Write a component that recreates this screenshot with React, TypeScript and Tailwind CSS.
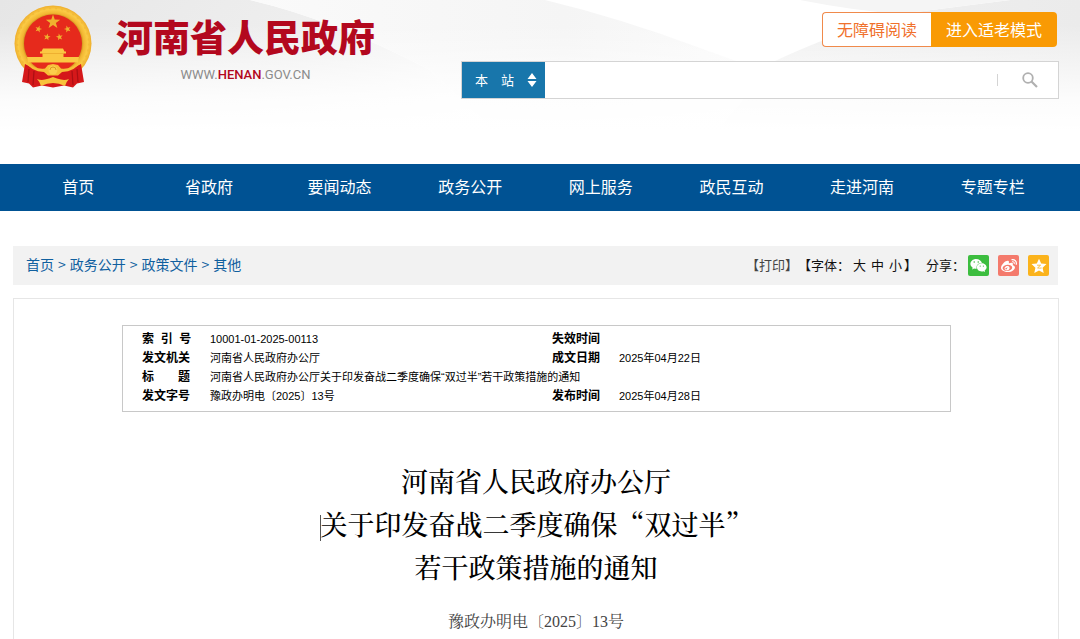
import React from "react";
import { FaWeibo, FaWeixin } from "react-icons/fa";

const navItems = ["首页", "省政府", "要闻动态", "政务公开", "网上服务", "政民互动", "走进河南", "专题专栏"];
const crumbs = ["首页", "政务公开", "政策文件", "其他"];

function Star({ x, y, r, turn = 0 }: { x: number; y: number; r: number; turn?: number }) {
  const points = Array.from({ length: 10 }, (_, i) => {
    const a = (Math.PI / 5) * i - Math.PI / 2 + turn;
    const d = i % 2 === 0 ? r : r * 0.4;
    return `${(x + d * Math.cos(a)).toFixed(2)},${(y + d * Math.sin(a)).toFixed(2)}`;
  }).join(" ");
  return <polygon points={points} />;
}

function Emblem() {
  return (
    <svg viewBox="0 0 78 84" className="h-[84px] w-[78px] shrink-0" aria-hidden="true">
      <defs>
        <radialGradient id="ring" cx="50%" cy="50%" r="50%">
          <stop offset="0.74" stopColor="#c98a1c" />
          <stop offset="0.8" stopColor="#f2b632" />
          <stop offset="0.9" stopColor="#fbcb45" />
          <stop offset="1" stopColor="#eeae2c" />
        </radialGradient>
      </defs>
      <ellipse cx="39" cy="38.500" rx="38.500" ry="38" fill="url(#ring)" />
      <ellipse cx="39" cy="38.500" rx="35.500" ry="35" fill="none" stroke="#e6a529" strokeWidth="1.500" strokeDasharray="2 4" opacity="0.3" />
      <circle cx="39" cy="38.500" r="29" fill="#e62a1c" />
      <g fill="#efb22f">
        <Star x={39} y={17} r={7.5} />
        <Star x={24.5} y={24} r={3.6} turn={0.3} />
        <Star x={53.5} y={24} r={3.6} turn={-0.3} />
        <Star x={33} y={32} r={3.6} turn={0.2} />
        <Star x={45.5} y={32} r={3.6} turn={-0.2} />
      </g>
      <path d="M29 43.500h20l1.500 3h1.500v2h-2.500V52h15.500l-1 5.500H14L13 52h15.500v-3.500H26v-2h1.500z" fill="#fbc843" />
      <path d="M28.500 48.500h21" stroke="#e8a62a" strokeWidth="0.700" />
      <path d="M11 59q10 6 21 4l7 3 7-3q11 2 21-4l3 18-7 1.500-4 4-9-2-11 2-11-2-9 2-4-4-7-1.500z" fill="#d5181a" />
      <path d="M15 64l-1 13m6-11l-1 14m39-14l1 14m4-16l1 13" stroke="#ab0f13" strokeWidth="1.200" />
      <path d="M12 57.500q9 7 19 6l3-3.500 5-1 5 1 3 3.500q10 1 19-6-5 9-18 9.500l-4 3.500H34l-4-3.500q-13-.5-18-9.500z" fill="#f7be38" />
      <circle cx="39" cy="65" r="4.500" fill="#fbcf4c" />
      <path d="M36 65a3 3 0 016 0" stroke="#dc9a23" fill="none" />
      <path d="M23 74q4 1.500 8 .5t8-2.500q4 1.500 8 2.500t8-.5q-3 3-4 7-6-3-12-3t-12 3q-1-4-4-7z" fill="#f8c23b" />
    </svg>
  );
}

function HeaderBackdrop() {
  return (
    <svg viewBox="0 0 1080 164" preserveAspectRatio="none" className="absolute inset-0 h-full w-full" aria-hidden="true">
      <defs>
        <linearGradient id="shadeLeft" x1="0" y1="0" x2="1" y2="0.3">
          <stop offset="0" stopColor="#e6e6e6" />
          <stop offset="0.6" stopColor="#efefef" />
          <stop offset="1" stopColor="#fafafa" />
        </linearGradient>
        <linearGradient id="shadeMiddle" x1="0" y1="0" x2="1" y2="0">
          <stop offset="0" stopColor="#fafafa" />
          <stop offset="0.6" stopColor="#f5f5f5" />
          <stop offset="1" stopColor="#fbfbfb" />
        </linearGradient>
        <linearGradient id="shadeRight" x1="0" y1="0" x2="1" y2="0">
          <stop offset="0" stopColor="#f2f2f2" />
          <stop offset="1" stopColor="#ebebeb" />
        </linearGradient>
        <linearGradient id="fadeDown" x1="0" y1="0" x2="0" y2="1">
          <stop offset="0.15" stopColor="#ffffff" stopOpacity="0" />
          <stop offset="0.6" stopColor="#ffffff" stopOpacity="0.85" />
          <stop offset="0.8" stopColor="#ffffff" />
        </linearGradient>
      </defs>
      <path d="M0 0H250Q330 18 430 70L530 164H0z" fill="url(#shadeLeft)" />
      <path d="M250 0H545Q620 18 700 48L775 75 720 164H530L430 70Q330 18 250 0z" fill="url(#shadeMiddle)" />
      <path d="M775 61Q830 35 900 14L1010 0H1080V164H690z" fill="url(#shadeRight)" />
      <path d="M800 0H1010L900 14Q850 10 800 0z" fill="#f5f5f5" />
      <rect width="1080" height="164" fill="url(#fadeDown)" />
    </svg>
  );
}

function Header() {
  return (
    <header className="relative h-[164px] overflow-hidden bg-white">
      <HeaderBackdrop />
      <div className="relative flex justify-between pr-[21px] pl-[14px]">
        <a href="#home" className="flex gap-6 pt-[5px]">
          <Emblem />
          <span className="flex flex-col items-center pt-[5px]">
            <span className="text-[37px] leading-[52px] font-black whitespace-nowrap text-[#b3081e]">河南省人民政府</span>
            <span className="pt-[4px] font-[Roboto] text-[13px] leading-[18px] text-[#8b8b8b]">
              WWW.<span className="font-medium text-[#b3081e]">HENAN</span>.GOV.CN
            </span>
          </span>
        </a>
        <div className="flex w-[598px] flex-col pt-3">
          <div className="flex h-[35px] justify-end pr-[2px] text-[16px]">
            <button type="button" className="rounded-l-sm border border-r-0 border-[#f08a4b] bg-white px-[14px] pb-[2px] text-[#f0712c]">
              无障碍阅读
            </button>
            <button type="button" className="rounded-r-sm bg-[#f99a04] px-[15px] pb-[2px] text-white">
              进入适老模式
            </button>
          </div>
          <form className="mt-[14px] flex h-[38px] border border-[#d4d4d4] bg-white">
            <div className="relative w-[83px] bg-[#1876ab]">
              <select aria-label="搜索范围" className="h-full w-full appearance-none bg-transparent pl-[13px] text-[13px] text-white outline-none">
                <option>本　站</option>
              </select>
              <svg viewBox="0 0 10 14" className="pointer-events-none absolute top-[11px] right-[8px] h-[14px] w-[10px]" fill="#fff" aria-hidden="true">
                <path d="M5 0l4.500 6H.5zM5 14l4.500-6H.5z" />
              </svg>
            </div>
            <input aria-label="搜索" type="text" className="min-w-0 flex-1 bg-transparent px-3 text-[14px] outline-none" />
            <button type="button" aria-label="搜索" className="my-3 flex w-[61px] items-center justify-center border-l border-[#d4d4d4] pl-[4px]">
              <svg viewBox="0 0 16 16" className="h-4 w-4 shrink-0" fill="none" stroke="#b0b0b0" aria-hidden="true">
                <circle cx="6" cy="6" r="4.800" strokeWidth="1.800" />
                <path d="M9.500 9.500l5.500 5.500" strokeWidth="2.200" />
              </svg>
            </button>
          </form>
        </div>
      </div>
    </header>
  );
}

function Toolbar() {
  return (
    <div className="mr-[1px] flex h-[39px] items-center justify-between bg-[#f2f2f2] pr-[9px] pl-[13px]">
      <nav aria-label="面包屑" className="flex pb-[2px] text-[14px] text-[#10609f]">
        {crumbs.map((c, i) => (
          <React.Fragment key={c}>
            {i > 0 && <span className="px-[4px]">&gt;</span>}
            <a href="#crumb">{c}</a>
          </React.Fragment>
        ))}
      </nav>
      <div className="flex items-center text-[13px] text-[#111]">
        <div className="flex pb-[2px]">
          <button type="button" className="text-[#444]">【打印】</button>
          <span>【字体：</span>
          <span className="flex gap-[5px] pr-[2px] pl-[3px]">
            <button type="button">大</button>
            <button type="button">中</button>
            <button type="button">小</button>
          </span>
          <span>】</span>
          <span className="ml-[9px]">分享：</span>
        </div>
        <span className="ml-[3px] flex gap-[9px] text-white">
          <a href="#wechat" aria-label="微信" className="flex size-[21px] items-center justify-center rounded-xs bg-[#3cbd3f]">
            <FaWeixin size={17} />
          </a>
          <a href="#weibo" aria-label="微博" className="flex size-[21px] items-center justify-center rounded-xs bg-[#f47a6c]">
            <FaWeibo size={16} />
          </a>
          <a href="#qzone" aria-label="QQ空间" className="flex size-[21px] items-center justify-center rounded-xs bg-[#fbb31c]">
            <svg viewBox="0 0 16 16" className="size-4" fill="#fff" aria-hidden="true">
              <path d="M8 .8l2.200 4.700 5.300.6-3.900 3.600 1.100 5.300L8 12.500 3.300 15l1.100-5.300L.5 6.100l5.300-.6z" />
              <path d="M6 7.200h3.600L6.600 9.900q2 .5 4 .1" fill="none" stroke="#fbb31c" strokeWidth="0.800" />
            </svg>
          </a>
        </span>
      </div>
    </div>
  );
}

function MetaTable() {
  const label = "p-0 text-left text-[12px] font-bold whitespace-nowrap";
  return (
    <div className="mr-[107px] ml-[108px] border border-[#c8c8c8] pt-[4px] pb-[5px] pl-[19px]">
      <table className="w-full table-fixed border-collapse font-['Liberation_Sans','Noto_Sans_CJK_SC',sans-serif] text-[11px] leading-[19px] text-black">
        <colgroup>
          <col className="w-[68px]" />
          <col className="w-[342px]" />
          <col className="w-[67px]" />
          <col />
        </colgroup>
        <tbody>
          <tr>
            <th scope="row" className={label}>索&nbsp;&nbsp;引&nbsp;&nbsp;号</th>
            <td className="p-0">10001-01-2025-00113</td>
            <th scope="row" className={label}>失效时间</th>
            <td className="p-0" />
          </tr>
          <tr>
            <th scope="row" className={label}>发文机关</th>
            <td className="p-0">河南省人民政府办公厅</td>
            <th scope="row" className={label}>成文日期</th>
            <td className="p-0">2025年04月22日</td>
          </tr>
          <tr>
            <th scope="row" className={label}>标　　题</th>
            <td colSpan={3} className="p-0">河南省人民政府办公厅关于印发奋战二季度确保“双过半”若干政策措施的通知</td>
          </tr>
          <tr>
            <th scope="row" className={label}>发文字号</th>
            <td className="p-0">豫政办明电〔2025〕13号</td>
            <th scope="row" className={label}>发布时间</th>
            <td className="p-0">2025年04月28日</td>
          </tr>
        </tbody>
      </table>
    </div>
  );
}

export default function App() {
  return (
    <div lang="zh-CN" className="flex min-h-screen flex-col overflow-x-hidden bg-white font-['Noto_Sans_CJK_SC',sans-serif]">
      <Header />
      <nav className="bg-[#005293] pr-[22px] pl-[13px]">
        <ul className="grid grid-cols-8">
          {navItems.map((n) => (
            <li key={n}>
              <a href="#nav" className="block pb-[2px] text-center text-[16px] leading-[45px] text-white">{n}</a>
            </li>
          ))}
        </ul>
      </nav>
      <main className="mt-[35px] mr-[21px] ml-[13px] flex flex-1 flex-col">
        <Toolbar />
        <article className="mt-[13px] flex-1 border border-b-0 border-[#e6e6e6] pt-[26px]">
          <MetaTable />
          <h1 className="mt-[47px] text-center font-['Noto_Serif_CJK_SC','Noto_Sans_CJK_SC',serif] text-[27px] leading-[43px] font-medium text-black">
            河南省人民政府办公厅
            <br />
            <span className="inline-block h-[26px] border-l border-[#555] align-middle" />
            关于印发奋战二季度确保“双过半”
            <br />
            若干政策措施的通知
          </h1>
          <p className="mt-[19px] text-center font-['Liberation_Serif','Noto_Serif_CJK_SC','Noto_Sans_CJK_SC',serif] text-[16px] leading-[30px] text-[#444]">
            豫政办明电〔2025〕13号
          </p>
        </article>
      </main>
    </div>
  );
}
